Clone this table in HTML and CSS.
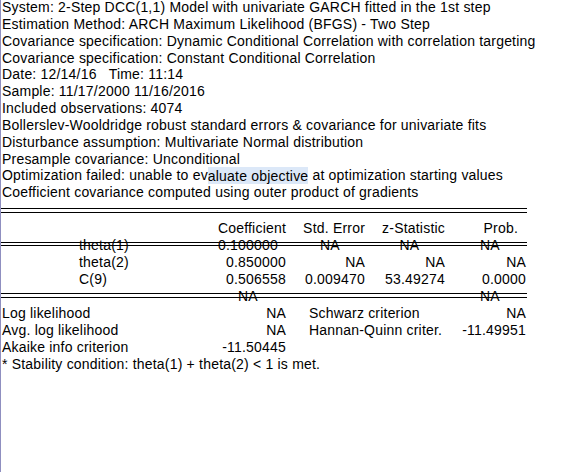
FILE: index.html
```html
<!DOCTYPE html>
<html>
<head>
<meta charset="utf-8">
<title>DCC output</title>
<link rel="stylesheet" href="styles.css">
</head>
<body>
<div class="page">
  <div class="info">
    <div>System: 2-Step DCC(1,1) Model with univariate GARCH fitted in the 1st step</div>
    <div>Estimation Method: ARCH Maximum Likelihood (BFGS) - Two Step</div>
    <div>Covariance specification: Dynamic Conditional Correlation with correlation targeting</div>
    <div>Covariance specification: Constant Conditional Correlation</div>
    <div>Date: 12/14/16&nbsp;&nbsp; Time: 11:14</div>
    <div>Sample: 11/17/2000 11/16/2016</div>
    <div>Included observations: 4074</div>
    <div>Bollerslev-Wooldridge robust standard errors &amp; covariance for univariate fits</div>
    <div>Disturbance assumption: Multivariate Normal distribution</div>
    <div>Presample covariance: Unconditional</div>
    <div>Optimization failed: unable to ev<span class="sel">aluate objective</span> at optimization starting values</div>
    <div>Coefficient covariance computed using outer product of gradients</div>
  </div>
  <div class="rule"></div>
  <div class="table">
    <div class="row">
      <span></span><span class="num">Coefficient</span><span class="num">Std. Error</span><span class="num">z-Statistic</span><span class="num prob">Prob.</span>
    </div>
    <div class="row struck-a">
      <span class="var">theta(1)</span><span class="mid">0.100000</span><span class="mid">NA</span><span class="mid">NA</span><span class="mid">NA</span>
    </div>
    <div class="row">
      <span class="var">theta(2)</span><span class="num">0.850000</span><span class="num">NA</span><span class="num">NA</span><span class="num">NA</span>
    </div>
    <div class="row">
      <span class="var">C(9)</span><span class="num">0.506558</span><span class="num">0.009470</span><span class="num">53.49274</span><span class="num">0.0000</span>
    </div>
    <div class="row struck-b">
      <span></span><span class="mid">NA</span><span></span><span></span><span class="mid">NA</span>
    </div>
    <div class="row">
      <span class="label">Log likelihood</span><span class="num">NA</span><span class="label2">Schwarz criterion</span><span class="num">NA</span>
    </div>
    <div class="row">
      <span class="label">Avg. log likelihood</span><span class="num">NA</span><span class="label2">Hannan-Quinn criter.</span><span class="num">-11.49951</span>
    </div>
    <div class="row">
      <span class="label">Akaike info criterion</span><span class="num">-11.50445</span>
    </div>
    <div class="row">
      <span class="note">* Stability condition: theta(1) + theta(2) &lt; 1 is met.</span>
    </div>
  </div>
</div>
</body>
</html>
```
FILE: styles.css
```css
html, body {
  margin: 0;
  padding: 0;
  background: #ffffff;
}

.page {
  height: 472px;
  box-sizing: border-box;
  border-left: 1px solid #8f8fc0;
  overflow: hidden;
  font-family: "Liberation Sans", Arial, sans-serif;
  font-size: 14px;
  letter-spacing: 0.2px;
  color: #000000;
}

.info {
  margin-top: -1px;
  padding-left: 1px;
  line-height: 16.85px;
  white-space: nowrap;
}

.sel {
  background: #dce8f8;
  padding: 0.5px 0;
}

.rule {
  width: 526px;
  height: 3px;
  border-top: 1px solid #000000;
  border-bottom: 1px solid #000000;
  margin-top: 7px;
  margin-bottom: 7px;
}

.table {
  width: 526px;
}

.row {
  display: grid;
  grid-template-columns: 200px 85px 79px 80px 81px;
  height: 17px;
  line-height: 17px;
  white-space: nowrap;
}

.num {
  text-align: right;
}

.prob {
  padding-right: 8px;
}

.mid {
  text-align: center;
  padding-left: 9px;
}

.var {
  padding-left: 78px;
}

.label {
  padding-left: 1px;
}

.label2 {
  grid-column: span 2;
  padding-left: 23px;
}

.note {
  grid-column: 1 / -1;
  padding-left: 1px;
}

.struck-a {
  background: linear-gradient(to bottom,
    transparent 5px, #000 5px, #000 6px, transparent 6px,
    transparent 8px, #000 8px, #000 9px, transparent 9px);
}

.struck-b {
  background: linear-gradient(to bottom,
    transparent 5px, #000 5px, #000 6px, transparent 6px,
    transparent 9px, #000 9px, #000 10px, transparent 10px);
}
```
